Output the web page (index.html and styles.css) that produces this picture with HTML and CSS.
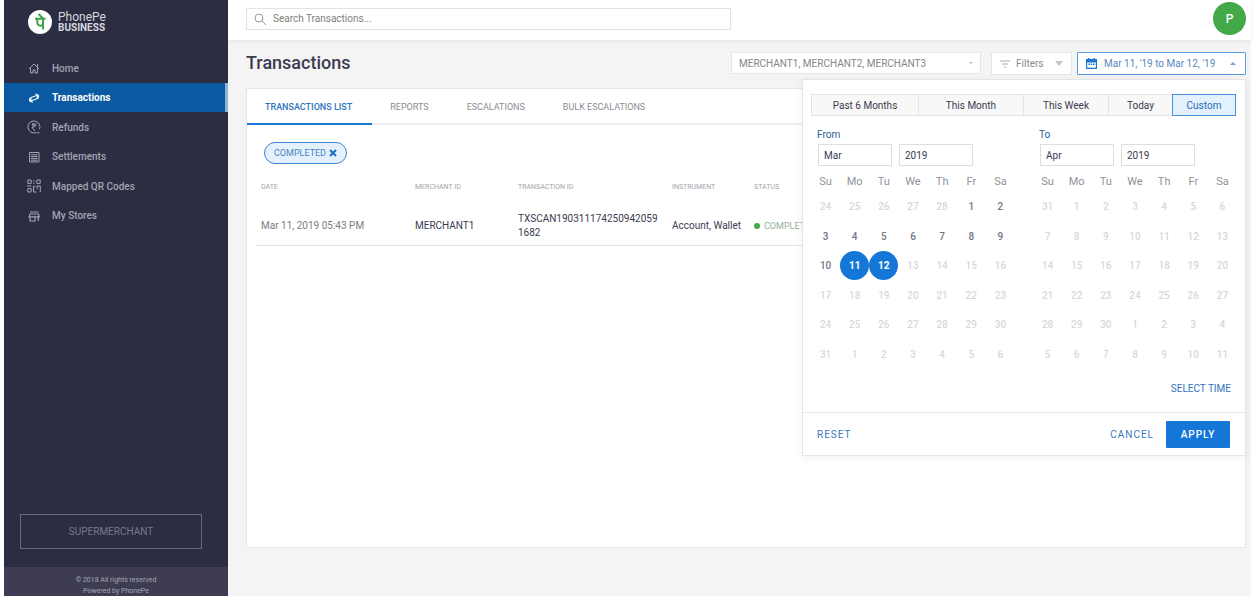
FILE: index.html
```html
<!DOCTYPE html>
<html lang="en">
<head>
    <meta charset="UTF-8">
    <title>PhonePe Business - Transactions</title>
    <link rel="stylesheet" href="styles.css">
</head>
<body>
    <aside class="sidebar">
        <div class="brand">
            <svg class="brand-logo" viewBox="0 0 24 24">
                <circle cx="12" cy="12" r="12" fill="#fff"/>
                <path d="M7 8.700h10.500M15 8.700v10.800M10.500 4l4.500 4.500M9.300 8.700v3.800c0 3 2.700 4 5.700 2.300M9.300 12.500v-3.500" fill="none" stroke="#3fa34b" stroke-width="2"/>
            </svg>
            <div class="brand-name">PhonePe<strong>BUSINESS</strong></div>
        </div>

        <nav class="nav">
            <a href="#">
                <svg viewBox="0 0 14 14"><path d="M2 8L7 3l5 5M3.500 7.200V12h2.500V9h2v3h2.500V7.200M10.500 3v3"/></svg>
                Home
            </a>
            <a href="#" class="active">
                <svg viewBox="0 0 14 14"><g transform="rotate(-20 7 7)"><path d="M4.500 5.500H12M9.500 3.500l2.500 2.200-2.500 2M9.500 8.700H2M4.500 6.700L2 8.700l2.500 2M4.500 5.500C2.800 5.500 2 6.800 2 8.500M9.500 8.700c1.700 0 2.500-1.300 2.500-3"/></g></svg>
                Transactions
            </a>
            <a href="#">
                <svg viewBox="0 0 14 14"><path d="M9 12.600A6 6 0 1 1 12.500 9.200M9.500 12.800h3M5 4h4.500M5 5.800h4.500M5 4c3.500 0 3.500 3.600 0 3.600L8 11"/></svg>
                Refunds
            </a>
            <a href="#">
                <svg viewBox="0 0 14 14"><path d="M2.500 2.500h9.500v9.500H2.500zM4 4.800h6.500M4 6.600h6.500M4 8.400h6.500M4 10.200h6.500"/></svg>
                Settlements
            </a>
            <a href="#">
                <svg viewBox="0 0 14 14"><path d="M.8 1h3.400v3.400H.8zM9.800 1h3.400v3.400H9.800zM.8 9.600h3.400V13H.8zM7 1v1.500M7 3.500v1.500M0 7h4.500M6.500 7v6h3M6.500 7.200h2M10 10V7h3.300v6"/></svg>
                Mapped QR Codes
            </a>
            <a href="#">
                <svg viewBox="0 0 14 14"><path d="M3 3h8.500M3 5h8.500l.8 2.800H2.200zM3 7.800V12h5V7.800M11.300 7.800V12" stroke-width="1.200"/></svg>
                My Stores
            </a>
        </nav>

        <button class="role">SUPERMERCHANT</button>
        <footer class="copyright">© 2018 All rights reserved<br>Powered by PhonePe</footer>
    </aside>

    <main class="main">
        <header class="topbar">
            <label class="search">
                <svg viewBox="0 0 12 12"><circle cx="5" cy="5" r="4"/><path d="M8 8l4 4"/></svg>
                <input type="text" placeholder="Search Transactions..." aria-label="Search Transactions">
            </label>
            <button class="avatar">P</button>
        </header>

        <div class="title-row">
            <h1>Transactions</h1>
            <div class="merchants">
                <select aria-label="Merchants">
                    <option>MERCHANT1, MERCHANT2, MERCHANT3</option>
                </select>
            </div>
            <button class="filters">
                <svg viewBox="0 0 10 8"><path d="M0 1h10M2 4h6M4 7h2"/></svg>
                Filters
                <span class="caret-down"></span>
            </button>
            <div class="date-range">
                <button class="date-button">
                    <svg viewBox="0 0 11 12"><path d="M0 1h2V0h1.500v1h4V0H9v1h2v10H0zM1.200 4.500v5.300h8.600V4.500z" fill-rule="evenodd"/><path d="M2.500 5.500H4V7H2.500zM4.800 5.500h1.500V7H4.800zM7 5.500h1.500V7H7z"/></svg>
                    Mar 11, '19 to Mar 12, '19
                    <span class="caret-up"></span>
                </button>

                <div class="picker">
                    <div class="presets">
                        <button>Past 6 Months</button>
                        <button>This Month</button>
                        <button>This Week</button>
                        <button>Today</button>
                        <button class="selected">Custom</button>
                    </div>
                    <div class="calendars">
                        <section>
                            <label for="from-month">From</label>
                            <div class="month-year">
                                <select id="from-month"><option>Mar</option></select>
                                <select aria-label="From year"><option>2019</option></select>
                            </div>
                            <table class="calendar" id="from"></table>
                        </section>
                        <section>
                            <label for="to-month">To</label>
                            <div class="month-year">
                                <select id="to-month"><option>Apr</option></select>
                                <select aria-label="To year"><option>2019</option></select>
                            </div>
                            <table class="calendar" id="to"></table>
                        </section>
                    </div>
                    <div class="select-time"><a href="#">SELECT TIME</a></div>
                    <div class="picker-footer">
                        <button class="reset">RESET</button>
                        <button>CANCEL</button>
                        <button class="apply">APPLY</button>
                    </div>
                </div>
            </div>
        </div>

        <section class="card">
            <nav class="tabs">
                <a href="#" class="active">TRANSACTIONS LIST</a>
                <a href="#">REPORTS</a>
                <a href="#">ESCALATIONS</a>
                <a href="#">BULK ESCALATIONS</a>
            </nav>
            <button class="chip">
                COMPLETED
                <svg viewBox="0 0 8 8"><path d="M1 1l6 6M7 1L1 7"/></svg>
            </button>
            <table class="transactions">
                <thead>
                    <tr>
                        <th class="col-date">DATE</th>
                        <th class="col-merchant">MERCHANT ID</th>
                        <th class="col-id">TRANSACTION ID</th>
                        <th class="col-instrument">INSTRUMENT</th>
                        <th>STATUS</th>
                    </tr>
                </thead>
                <tbody>
                    <tr>
                        <td class="muted">Mar 11, 2019 05:43 PM</td>
                        <td>MERCHANT1</td>
                        <td class="txn-id">TXSCAN1903111742509420591682</td>
                        <td>Account, Wallet</td>
                        <td class="status">COMPLETED</td>
                    </tr>
                </tbody>
            </table>
        </section>
    </main>

    <script>
        // start: first day shown, prev: length of the previous month, days: length of the month
        function drawCalendar(id, start, prev, days, firstOpen, lastOpen, picked) {
            let html = "<thead><tr>";
            ["Su", "Mo", "Tu", "We", "Th", "Fr", "Sa"].forEach(d => {
                html += `<th>${d}</th>`;
            });
            html += "</tr></thead><tbody>";
            let day = start;
            let limit = prev;
            let current = false;
            for (let week = 0; week < 6; week++) {
                html += "<tr>";
                for (let i = 0; i < 7; i++) {
                    let cls = "";
                    if (current && day >= firstOpen && day <= lastOpen) cls = "open";
                    if (current && picked.includes(day)) cls = "picked";
                    html += `<td><button class="${cls}">${day}</button></td>`;
                    day++;
                    if (day > limit) {
                        day = 1;
                        current = !current;
                        limit = days;
                    }
                }
                html += "</tr>";
            }
            document.getElementById(id).innerHTML = html + "</tbody>";
        }

        drawCalendar("from", 24, 28, 31, 1, 12, [11, 12]);
        drawCalendar("to", 31, 31, 30, 0, -1, []);
    </script>
</body>
</html>
```

FILE: styles.css
```css
* {
    box-sizing: border-box;
}

body {
    display: flex;
    min-height: 100vh;
    margin: 0;
    padding: 0 7px 2px 4px;
    background-color: #fff;
    color: #3a3b50;
    font-family: Roboto, sans-serif;
    font-size: 10px;
}

button, input, select {
    font-family: inherit;
    font-size: inherit;
    color: inherit;
    border-radius: 0;
}

button {
    padding: 0;
    border: none;
    background: none;
    cursor: pointer;
}

select {
    appearance: none;
}

a {
    text-decoration: none;
}

/* sidebar */
.sidebar {
    display: flex;
    flex-direction: column;
    flex: 0 0 224px;
    background-color: #2c2d43;
    color: #a3a4b1;
}

.brand {
    display: flex;
    align-items: center;
    gap: 6px;
    height: 53px;
    padding: 0 24px;
    padding-bottom: 9px;
}

.brand-logo {
    width: 24px;
    height: 24px;
}

.brand-name {
    color: #d6d7df;
    font-size: 12px;
    line-height: 12px;
}

.brand-name strong {
    display: block;
    font-size: 10px;
    font-weight: 700;
    line-height: 10px;
}

.nav {
    display: flex;
    flex-direction: column;
    height: 177px;
}

.nav a {
    display: flex;
    flex: 1;
    align-items: center;
    gap: 11px;
    padding: 1px 0 0 23px;
    color: #a3a4b1;
    font-weight: 500;
}

.nav svg {
    width: 14px;
    height: 14px;
    fill: none;
    stroke: currentColor;
}

.nav .active {
    border-right: 3px solid #8db5da;
    background-color: #0b59a0;
    color: #fff;
    font-weight: 700;
}

.role {
    height: 35px;
    margin: auto 26px 18px 16px;
    border: 1px solid #686979;
    color: #77788a;
}

.copyright {
    height: 29px;
    padding-top: 8px;
    overflow: hidden;
    background-color: #3e3c52;
    color: #a3a4b1;
    font-size: 7px;
    line-height: 11px;
    text-align: center;
}

/* top bar */
.main {
    display: flex;
    flex-direction: column;
    flex: 1;
    min-width: 0;
    background-color: #f4f4f4;
}

.topbar {
    display: flex;
    justify-content: space-between;
    align-items: center;
    height: 40px;
    padding: 0 5px 3px 18px;
    background-color: #fff;
    box-shadow: 0 1px 4px rgba(0,0,0,0.08);
}

.search {
    display: flex;
    align-items: center;
    gap: 7px;
    width: 485px;
    height: 22px;
    padding-left: 7px;
    border: 1px solid #e2e2e2;
}

.search svg {
    width: 12px;
    height: 12px;
    fill: none;
    stroke: #999;
}

.search input {
    flex: 1;
    padding: 0;
    border: none;
    outline: none;
}

.search input::placeholder {
    color: #808080;
}

.avatar {
    width: 33px;
    height: 33px;
    border-radius: 50%;
    background-color: #43a847;
    color: #fff;
    font-size: 12px;
    font-weight: 500;
}

/* title and filters */
.title-row {
    display: flex;
    height: 48px;
    padding: 12px 5px 0 18px;
}

h1 {
    margin: 0 auto 0 0;
    font-size: 18px;
    font-weight: 500;
    line-height: 22px;
}

.merchants {
    position: relative;
    width: 250px;
    margin-right: 10px;
}

.merchants::after {
    content: "";
    position: absolute;
    top: 10px;
    right: 8px;
    border: 2px solid transparent;
    border-top-color: #bbb;
}

.merchants select {
    width: 100%;
    height: 22px;
    padding: 0 7px;
    border: 1px solid #e6e6e6;
    background-color: #fff;
    color: #85858c;
}

.filters {
    display: flex;
    align-items: center;
    gap: 6px;
    width: 81px;
    height: 23px;
    margin-right: 5px;
    padding: 0 8px;
    border: 1px solid #e6e6e6;
    background-color: #fff;
    color: #8a8a90;
}

.filters svg {
    width: 10px;
    height: 8px;
    stroke: #aaa;
}

.caret-down {
    margin-left: auto;
    border: 4px solid transparent;
    border-top: 5px solid #c4c4c4;
    border-bottom: none;
}

.caret-up {
    margin-left: auto;
    border: 3px solid transparent;
    border-bottom-color: #76a5d8;
    border-top: none;
}

.date-range {
    position: relative;
}

.date-button {
    display: flex;
    align-items: center;
    gap: 7px;
    width: 169px;
    height: 23px;
    padding: 0 9px 0 8px;
    border: 1px solid #5b9bdf;
    border-radius: 1px;
    background-color: #fff;
    color: #5b87bd;
}

.date-button svg {
    width: 11px;
    height: 12px;
    fill: #1976d2;
}

/* date picker */
.picker {
    position: absolute;
    top: 27px;
    right: 0;
    z-index: 1;
    width: 444px;
    border: 1px solid #e4e4e4;
    background-color: #fff;
    box-shadow: 0 2px 8px rgba(0,0,0,0.06);
}

.presets {
    display: grid;
    grid-template-columns: 107fr 105fr 85fr 64fr 64fr;
    margin: 14px 9px 12px 8px;
}

.presets button {
    height: 22px;
    border: 1px solid #e4e4e4;
    border-right: none;
    background-color: #f8f8f8;
}

.presets .selected {
    border: 1px solid #4a90d9;
    background-color: #e3f0fd;
    color: #2a6db5;
}

.calendars {
    display: flex;
    gap: 18px;
    padding: 0 8px;
}

.calendars section {
    flex: 1;
}

.calendars label {
    display: block;
    padding-left: 6px;
    color: #2a6095;
    line-height: 14px;
}

.month-year {
    display: flex;
    gap: 7px;
    margin-top: 2px;
    padding-left: 7px;
}

.month-year select {
    width: 74px;
    height: 22px;
    padding: 0 5px;
    border: 1px solid #dedede;
    background-color: #fff;
}

.calendar {
    width: 100%;
    height: 203px;
    border-collapse: collapse;
    table-layout: fixed;
}

.calendar th {
    height: 26px;
    padding: 5px 0 0;
    color: #91929c;
    font-size: 11px;
    font-weight: 400;
}

.calendar td {
    padding: 0;
    text-align: center;
}

.calendar button {
    width: 29px;
    height: 29px;
    border-radius: 50%;
    color: #d8d8dc;
    font-weight: 500;
    vertical-align: top;
}

.calendar .open {
    color: #757685;
}

.calendar .picked {
    background-color: #1477d8;
    color: #fff;
    font-weight: 700;
}

.select-time {
    padding: 13px 14px 16px;
    line-height: 14px;
    text-align: right;
}

.select-time a {
    color: #2f74bd;
}

.picker-footer {
    display: flex;
    align-items: center;
    gap: 12px;
    height: 43px;
    padding: 0 15px 0 14px;
    border-top: 1px solid #e6e6e6;
}

.picker-footer button {
    color: #3a78bb;
    letter-spacing: 1px;
}

.picker-footer .reset {
    margin-right: auto;
}

.picker-footer .apply {
    width: 64px;
    height: 27px;
    border-radius: 1px;
    background-color: #1477d8;
    color: #fff;
    font-weight: 500;
}

/* transactions card */
.card {
    flex: 1;
    margin: 0 5px 48px 18px;
    border: 1px solid #e6e6e6;
    background-color: #fff;
}

.tabs {
    display: flex;
    height: 36px;
    border-bottom: 2px solid #f0f0f0;
}

.tabs a {
    height: 36px;
    padding: 0 20px 0 18px;
    color: #8c8c94;
    font-size: 9px;
    line-height: 36px;
}

.tabs .active {
    border-bottom: 2px solid #1976d2;
    color: #2f74bd;
    font-weight: 500;
}

.chip {
    display: flex;
    align-items: center;
    gap: 3px;
    height: 22px;
    margin: 17px 17px 13px;
    padding: 0 9px;
    border: 1px solid #3d86cf;
    border-radius: 11px;
    background-color: #e4f1fd;
    color: #4a83bd;
    font-size: 9px;
}

.chip svg {
    width: 8px;
    height: 8px;
    stroke: #1a6fc4;
    stroke-width: 2;
}

.transactions {
    width: calc(100% - 18px);
    margin: 0 9px;
    border-collapse: collapse;
    table-layout: fixed;
}

.transactions th {
    height: 20px;
    padding: 0 5px;
    color: #a4a4aa;
    font-size: 7px;
    font-weight: 400;
    text-align: left;
}

.transactions td {
    height: 48px;
    padding: 0 5px;
    padding-top: 10px;
    border-bottom: 1px solid #e4e4e4;
    line-height: 14px;
}

.col-date {
    width: 154px;
}

.col-merchant {
    width: 103px;
}

.col-id {
    width: 154px;
}

.col-instrument {
    width: 82px;
}

.txn-id {
    word-break: break-all;
}

.transactions .muted {
    color: #7b7b84;
}

.transactions .status {
    color: #94b096;
    font-size: 9px;
}

.status::before {
    content: "";
    display: inline-block;
    width: 6px;
    height: 6px;
    margin-right: 4px;
    border-radius: 50%;
    background-color: #43a847;
}
```
